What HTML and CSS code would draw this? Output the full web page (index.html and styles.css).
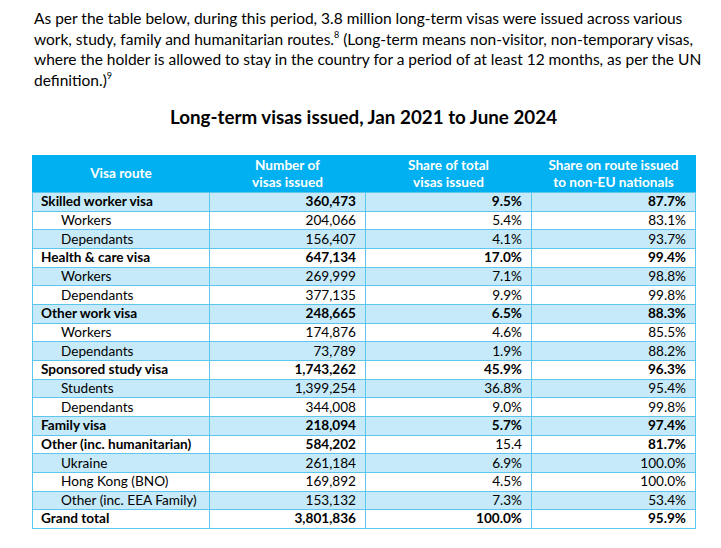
FILE: index.html
```html
<!DOCTYPE html>
<html lang="en">
<head>
<meta charset="utf-8">
<title>Long-term visas issued</title>
<link rel="stylesheet" href="styles.css">
</head>
<body>
<div class="page">
  <p class="intro">As per the table below, during this period, 3.8 million long-term visas were issued across various work, study, family and humanitarian routes.<sup>8</sup> (Long-term means non-visitor, non-temporary visas, where the holder is allowed to stay in the country for a period of at least 12 months, as per the UN definition.)<sup>9</sup></p>
  <h2 class="title">Long-term visas issued, Jan 2021 to June 2024</h2>
  <table class="visas">
    <colgroup>
      <col class="c1"><col class="c2"><col class="c3"><col class="c4">
    </colgroup>
    <thead>
      <tr>
        <th>Visa route</th>
        <th>Number of<br>visas issued</th>
        <th>Share of total<br>visas issued</th>
        <th>Share on route issued<br>to non-EU nationals</th>
      </tr>
    </thead>
    <tbody>
      <tr class="bold"><td>Skilled worker visa</td><td>360,473</td><td>9.5%</td><td>87.7%</td></tr>
      <tr><td class="sub">Workers</td><td>204,066</td><td>5.4%</td><td>83.1%</td></tr>
      <tr><td class="sub">Dependants</td><td>156,407</td><td>4.1%</td><td>93.7%</td></tr>
      <tr class="bold"><td>Health &amp; care visa</td><td>647,134</td><td>17.0%</td><td>99.4%</td></tr>
      <tr><td class="sub">Workers</td><td>269,999</td><td>7.1%</td><td>98.8%</td></tr>
      <tr><td class="sub">Dependants</td><td>377,135</td><td>9.9%</td><td>99.8%</td></tr>
      <tr class="bold"><td>Other work visa</td><td>248,665</td><td>6.5%</td><td>88.3%</td></tr>
      <tr><td class="sub">Workers</td><td>174,876</td><td>4.6%</td><td>85.5%</td></tr>
      <tr><td class="sub">Dependants</td><td>73,789</td><td>1.9%</td><td>88.2%</td></tr>
      <tr class="bold"><td>Sponsored study visa</td><td>1,743,262</td><td>45.9%</td><td>96.3%</td></tr>
      <tr><td class="sub">Students</td><td>1,399,254</td><td>36.8%</td><td>95.4%</td></tr>
      <tr><td class="sub">Dependants</td><td>344,008</td><td>9.0%</td><td>99.8%</td></tr>
      <tr class="bold"><td>Family visa</td><td>218,094</td><td>5.7%</td><td>97.4%</td></tr>
      <tr class="bold"><td>Other (inc. humanitarian)</td><td>584,202</td><td class="normal">15.4</td><td>81.7%</td></tr>
      <tr><td class="sub">Ukraine</td><td>261,184</td><td>6.9%</td><td>100.0%</td></tr>
      <tr><td class="sub">Hong Kong (BNO)</td><td>169,892</td><td>4.5%</td><td>100.0%</td></tr>
      <tr><td class="sub">Other (inc. EEA Family)</td><td>153,132</td><td>7.3%</td><td>53.4%</td></tr>
      <tr class="bold"><td>Grand total</td><td>3,801,836</td><td>100.0%</td><td>95.9%</td></tr>
    </tbody>
  </table>
</div>
</body>
</html>
```
FILE: styles.css
```css
html, body {
  margin: 0;
  background: #ffffff;
}

body {
  font-family: Lato, "Open Sans", sans-serif;
  color: #000000;
}

.page {
  padding: 8px 0 0 0;
}

.intro {
  margin: 0 0 0 34px;
  width: 670px;
  font-size: 15.5px;
  line-height: 20.5px;
}

.intro sup {
  font-size: 9px;
  line-height: 9px;
  vertical-align: top;
  position: relative;
  top: 1px;
}

.title {
  margin: 15px 0 0 0;
  text-align: center;
  font-size: 18.8px;
  font-weight: 700;
  line-height: 24px;
  padding-left: 6px;
}

.visas {
  margin: 26px 0 0 32px;
  border-collapse: collapse;
  table-layout: fixed;
  width: 663px;
  font-size: 13.6px;
}

.c1 { width: 177px; }
.c2 { width: 156px; }
.c3 { width: 166px; }
.c4 { width: 164px; }

.visas th {
  background: #00b0f0;
  color: #ffffff;
  font-weight: 700;
  text-align: center;
  line-height: 17.5px;
  height: 36px;
  padding: 0;
  border: 1px solid #00b0f0;
  border-bottom-color: #5cc6ee;
}

.visas td {
  height: 17.67px;
  padding: 0 9px 0 8px;
  line-height: 17px;
  text-align: right;
  border: 1px solid #5cc6ee;
  white-space: nowrap;
}

.visas td:first-child {
  text-align: left;
}

.visas td.sub {
  padding-left: 28px;
}

.visas tbody tr:nth-child(odd) td {
  background: #c6eaf9;
}

.visas tr.bold td {
  font-weight: 700;
}

.visas tr.bold td.normal {
  font-weight: 400;
}
```
